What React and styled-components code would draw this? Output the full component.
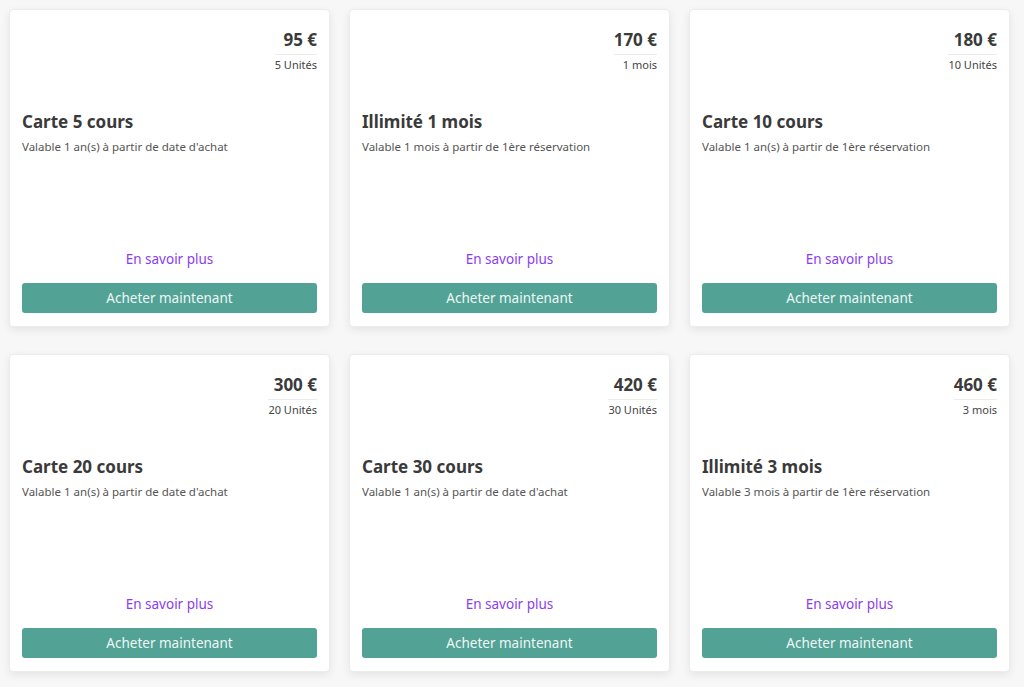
import React from "react";
import styled, { createGlobalStyle } from "styled-components";

const GlobalStyle = createGlobalStyle`
    body {
        margin: 0;
        background-color: #f7f7f7;
        font-family: "Noto Sans", "DejaVu Sans", sans-serif;
        color: #3a3a3a;
    }
`;

const Grid = styled.div`
    display: grid;
    grid-template-columns: repeat(3, 321px);
    column-gap: 19px;
    row-gap: 27px;
    padding: 9px;
`;

const Card = styled.div`
    height: 318px;
    box-sizing: border-box;
    background-color: #fff;
    border: 1px solid #ececec;
    border-radius: 4px;
    box-shadow: 0 3px 8px rgba(0, 0, 0, 0.08);
    padding: 16px 12px 13px 12px;
    display: flex;
    flex-direction: column;
`;

const PriceBlock = styled.div`
    align-self: flex-end;
    display: flex;
    flex-direction: column;
    align-items: flex-end;
`;

const Price = styled.div`
    font-size: 17px;
    font-weight: 700;
    line-height: 27px;
    padding-bottom: 1px;
    border-bottom: 1px solid #ebebeb;
    align-self: stretch;
    text-align: right;
`;

const Units = styled.div`
    font-size: 11px;
    line-height: 15px;
    margin-top: 2px;
    color: #444;
`;

const Title = styled.h3`
    margin: 39px 0 0 0;
    font-size: 17px;
    font-weight: 700;
    line-height: 21px;
`;

const Description = styled.p`
    margin: 7px 0 0 0;
    font-size: 11.5px;
    line-height: 15px;
    color: #555;
`;

const MoreLink = styled.a`
    margin-top: auto;
    text-align: center;
    font-size: 13.5px;
    line-height: 18px;
    color: #8a3df0;
    text-decoration: none;
    cursor: pointer;
`;

const BuyButton = styled.button`
    margin-top: 15px;
    height: 30px;
    border: none;
    border-radius: 3px;
    background-color: #52a395;
    color: #eef7f5;
    font-family: inherit;
    font-size: 13.5px;
    cursor: pointer;
`;

const offers = [
    { price: "95 €", units: "5 Unités", title: "Carte 5 cours", desc: "Valable 1 an(s) à partir de date d'achat" },
    { price: "170 €", units: "1 mois", title: "Illimité 1 mois", desc: "Valable 1 mois à partir de 1ère réservation" },
    { price: "180 €", units: "10 Unités", title: "Carte 10 cours", desc: "Valable 1 an(s) à partir de 1ère réservation" },
    { price: "300 €", units: "20 Unités", title: "Carte 20 cours", desc: "Valable 1 an(s) à partir de date d'achat" },
    { price: "420 €", units: "30 Unités", title: "Carte 30 cours", desc: "Valable 1 an(s) à partir de date d'achat" },
    { price: "460 €", units: "3 mois", title: "Illimité 3 mois", desc: "Valable 3 mois à partir de 1ère réservation" },
];

function OfferCard({ offer }) {
    return (
        <Card>
            <PriceBlock>
                <Price>{offer.price}</Price>
                <Units>{offer.units}</Units>
            </PriceBlock>
            <Title>{offer.title}</Title>
            <Description>{offer.desc}</Description>
            <MoreLink>En savoir plus</MoreLink>
            <BuyButton>Acheter maintenant</BuyButton>
        </Card>
    );
}

export default function App() {
    return (
        <>
            <GlobalStyle />
            <Grid>
                {offers.map((o) => (
                    <OfferCard key={o.title} offer={o} />
                ))}
            </Grid>
        </>
    );
}
